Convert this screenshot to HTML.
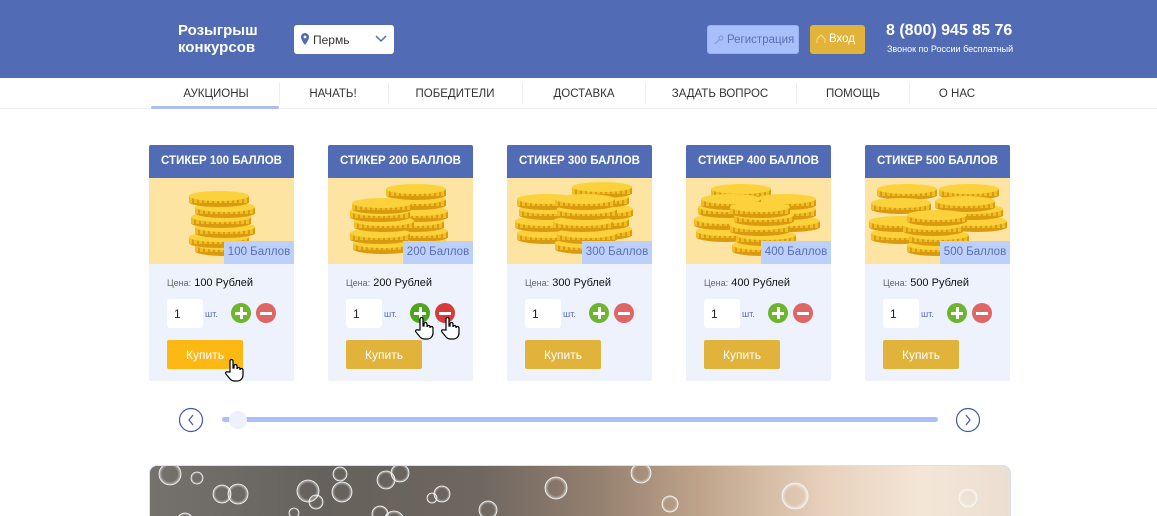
<!DOCTYPE html>
<html style="width:1157px;height:516px;overflow:hidden"><head><meta charset="utf-8"><style>
*{box-sizing:border-box;margin:0;padding:0}
body{width:1157px;height:516px;overflow:hidden;background:#fff;font-family:"Liberation Sans",Arial,sans-serif;position:relative}
.abs{position:absolute}
.hdr{left:0;top:0;width:1157px;height:78px;background:#516bb4}
.logo{left:178px;top:22px;color:#fff;font-weight:bold;font-size:15px;line-height:17px}
.sel{left:294px;top:25px;width:100px;height:29px;background:#fff;border-radius:3px;font-size:12px;color:#333;padding:8px 0 0 19px}
.btn{border-radius:3px;font-size:11.5px;height:29px;top:25px;padding-top:8px}
.nav{left:0;top:78px;width:1157px;height:31px;border-bottom:1px solid #eef0f4;background:#fff}
.ni{top:88px;font-size:11.5px;color:#333;transform:translateX(-50%);white-space:nowrap}
.dv{top:83px;width:1px;height:21px;background:#eceef2}
.card{top:145px;width:145px;height:236px;background:#edf2fd;border-radius:2px;overflow:hidden}
.ch{height:33px;background:#516bb4;color:#fff;font-weight:bold;font-size:11.5px;text-align:center;padding-top:10px}
.img{position:relative;height:86px;background:#fde4a2}
.badge{position:absolute;right:0;bottom:0;width:70px;height:23px;background:#bdd0fa;color:#5b6fb2;font-size:11.5px;text-align:center;padding-top:5px}
.price{position:absolute;left:18px;top:132px;font-size:11px;color:#111}
.price span{font-size:9px;color:#666}
.inp{position:absolute;left:18px;top:154px;width:36px;height:29px;background:#fff;border-radius:3px;font-size:12px;padding:8px 0 0 7px;color:#222}
.sht{position:absolute;left:56px;top:164px;font-size:9px;color:#5b6fb2}
.pl,.mi{position:absolute;top:158px;width:20px;height:20px;border-radius:50%}
.pl{left:82px;background:#6db52d}.mi{left:107px;background:#e06565}
.pl:before,.mi:before{content:"";position:absolute;left:4px;top:8.5px;width:12px;height:3px;background:#fff}
.pl:after{content:"";position:absolute;left:8.5px;top:4px;width:3px;height:12px;background:#fff}
.buy{position:absolute;left:18px;top:195px;width:76px;height:29px;background:#e2b33b;border-radius:2px;color:#fff;font-size:12px;text-align:center;padding-top:8px}
</style></head><body>
<svg width="0" height="0" style="position:absolute"><defs>
<pattern id="st" width="5" height="10" patternUnits="userSpaceOnUse"><rect width="5" height="10" fill="#f2bd22"/><rect x="3" width="2" height="10" fill="#d79d12"/></pattern>
<g id="c"><ellipse cx="0" cy="9" rx="30" ry="5" fill="#d99a10"/><rect x="-30" y="3" width="60" height="7" fill="url(#st)"/><ellipse cx="0" cy="3" rx="30" ry="5" fill="#fbd23c"/></g>
<radialGradient id="bb"><stop offset="0.7" stop-color="#fff" stop-opacity="0"/><stop offset="1" stop-color="#fff" stop-opacity=".6"/></radialGradient>
</defs></svg>

<div class="abs hdr"></div>
<div class="abs logo">Розыгрыш<br>конкурсов</div>
<div class="abs sel">Пермь
<svg class="abs" style="left:7px;top:8px" width="8" height="12" viewBox="0 0 8 12"><path d="M4 0C1.8 0 0 1.8 0 4c0 3 4 8 4 8s4-5 4-8c0-2.2-1.8-4-4-4z" fill="#516bb4"/><circle cx="4" cy="4" r="1.4" fill="#fff"/></svg>
<svg class="abs" style="left:81px;top:10px" width="12" height="8" viewBox="0 0 12 8"><path d="M1 1l5 5 5-5" stroke="#516bb4" stroke-width="1.5" fill="none"/></svg></div>
<div class="abs btn" style="left:707px;width:92px;background:#a9bff9;border:1px solid #98b0f0;color:#5b6fb2;padding-left:19px">Регистрация
<svg class="abs" style="left:6px;top:9px" width="10" height="10" viewBox="0 0 10 10"><circle cx="7" cy="3" r="2" stroke="#7f95d4" fill="none"/><path d="M5.5 4.5L1 9" stroke="#7f95d4"/></svg></div>
<div class="abs btn" style="left:810px;width:55px;background:#e2b33b;color:#fff;padding-left:19px">Вход
<svg class="abs" style="left:6px;top:9px" width="10" height="10" viewBox="0 0 10 10"><path d="M1 9V5l4-4 4 4v4" stroke="#f8dc90" fill="none"/></svg></div>
<div class="abs" style="left:886px;top:22px;color:#fff;font-weight:bold;font-size:16px">8 (800) 945 85 76</div>
<div class="abs" style="left:887px;top:44px;color:#fff;font-size:9px">Звонок по России бесплатный</div>

<div class="abs nav"></div>
<div class="abs" style="left:151px;top:106px;width:128px;height:3px;background:#a9bff9;border-radius:2px"></div>
<div class="abs ni" style="left:216px">АУКЦИОНЫ</div>
<div class="abs ni" style="left:333px">НАЧАТЬ!</div>
<div class="abs ni" style="left:455px">ПОБЕДИТЕЛИ</div>
<div class="abs ni" style="left:584px">ДОСТАВКА</div>
<div class="abs ni" style="left:720px">ЗАДАТЬ ВОПРОС</div>
<div class="abs ni" style="left:853px">ПОМОЩЬ</div>
<div class="abs ni" style="left:957px">О НАС</div>
<div class="abs dv" style="left:279px"></div><div class="abs dv" style="left:388px"></div><div class="abs dv" style="left:522px"></div><div class="abs dv" style="left:645px"></div><div class="abs dv" style="left:796px"></div><div class="abs dv" style="left:909px"></div>

<div class="abs card" style="left:149px"><div class="ch">СТИКЕР 100 БАЛЛОВ</div><div class="img">
<svg width="145" height="86"><use href="#c" x="76" y="64"/><use href="#c" x="70" y="56"/><use href="#c" x="76" y="46"/><use href="#c" x="72" y="36"/><use href="#c" x="76" y="26"/><use href="#c" x="70" y="15"/></svg>
<div class="badge">100 Баллов</div></div>
<div class="price"><span>Цена:</span> 100 Рублей</div><div class="inp">1</div><div class="sht">шт.</div><div class="pl"></div><div class="mi"></div><div class="buy" style="background:#fdb813">Купить</div></div>

<div class="abs card" style="left:328px"><div class="ch">СТИКЕР 200 БАЛЛОВ</div><div class="img">
<svg width="145" height="86"><use href="#c" x="88" y="60"/><use href="#c" x="90" y="50"/><use href="#c" x="86" y="40"/><use href="#c" x="90" y="30"/><use href="#c" x="88" y="18"/><use href="#c" x="88" y="8"/><use href="#c" x="55" y="62"/><use href="#c" x="52" y="52"/><use href="#c" x="56" y="40"/><use href="#c" x="52" y="30"/><use href="#c" x="54" y="22"/></svg>
<div class="badge">200 Баллов</div></div>
<div class="price"><span>Цена:</span> 200 Рублей</div><div class="inp">1</div><div class="sht">шт.</div><div class="pl" style="background:#4ea51c"></div><div class="mi" style="background:#d63b3b"></div><div class="buy">Купить</div></div>

<div class="abs card" style="left:507px"><div class="ch">СТИКЕР 300 БАЛЛОВ</div><div class="img">
<svg width="145" height="86"><use href="#c" x="95" y="48"/><use href="#c" x="92" y="38"/><use href="#c" x="96" y="28"/><use href="#c" x="92" y="16"/><use href="#c" x="95" y="6"/><use href="#c" x="40" y="52"/><use href="#c" x="38" y="40"/><use href="#c" x="42" y="28"/><use href="#c" x="40" y="18"/><use href="#c" x="78" y="62"/><use href="#c" x="80" y="52"/><use href="#c" x="76" y="40"/><use href="#c" x="80" y="28"/><use href="#c" x="78" y="18"/></svg>
<div class="badge">300 Баллов</div></div>
<div class="price"><span>Цена:</span> 300 Рублей</div><div class="inp">1</div><div class="sht">шт.</div><div class="pl"></div><div class="mi"></div><div class="buy">Купить</div></div>

<div class="abs card" style="left:686px"><div class="ch">СТИКЕР 400 БАЛЛОВ</div><div class="img">
<svg width="145" height="86"><use href="#c" x="55" y="8"/><use href="#c" x="104" y="40"/><use href="#c" x="100" y="28"/><use href="#c" x="100" y="18"/><use href="#c" x="40" y="50"/><use href="#c" x="38" y="38"/><use href="#c" x="42" y="26"/><use href="#c" x="45" y="18"/><use href="#c" x="76" y="64"/><use href="#c" x="80" y="54"/><use href="#c" x="74" y="44"/><use href="#c" x="78" y="34"/><use href="#c" x="74" y="26"/></svg>
<div class="badge">400 Баллов</div></div>
<div class="price"><span>Цена:</span> 400 Рублей</div><div class="inp">1</div><div class="sht">шт.</div><div class="pl"></div><div class="mi"></div><div class="buy">Купить</div></div>

<div class="abs card" style="left:865px"><div class="ch">СТИКЕР 500 БАЛЛОВ</div><div class="img">
<svg width="145" height="86"><use href="#c" x="42" y="8"/><use href="#c" x="104" y="8"/><use href="#c" x="112" y="40"/><use href="#c" x="108" y="28"/><use href="#c" x="100" y="20"/><use href="#c" x="36" y="52"/><use href="#c" x="34" y="40"/><use href="#c" x="36" y="22"/><use href="#c" x="72" y="64"/><use href="#c" x="74" y="54"/><use href="#c" x="68" y="44"/><use href="#c" x="72" y="34"/></svg>
<div class="badge">500 Баллов</div></div>
<div class="price"><span>Цена:</span> 500 Рублей</div><div class="inp">1</div><div class="sht">шт.</div><div class="pl"></div><div class="mi"></div><div class="buy">Купить</div></div>

<svg class="abs" style="left:224px;top:358px" width="20" height="24" viewBox="0 0 20 24"><path d="M6 14V3a1.5 1.5 0 013 0v7h1V8a1.5 1.5 0 013 0v3a1.5 1.5 0 013 0v1a1.5 1.5 0 013 0v5c0 3-2 6-6 6H10c-2 0-3-1-4-2l-4-5c-1-1 0-3 2-2z" fill="#fff" stroke="#000" stroke-width="1.2"/></svg>
<svg class="abs" style="left:414px;top:316px" width="20" height="24" viewBox="0 0 20 24"><path d="M6 14V3a1.5 1.5 0 013 0v7h1V8a1.5 1.5 0 013 0v3a1.5 1.5 0 013 0v1a1.5 1.5 0 013 0v5c0 3-2 6-6 6H10c-2 0-3-1-4-2l-4-5c-1-1 0-3 2-2z" fill="#fff" stroke="#000" stroke-width="1.2"/></svg>
<svg class="abs" style="left:440px;top:316px" width="20" height="24" viewBox="0 0 20 24"><path d="M6 14V3a1.5 1.5 0 013 0v7h1V8a1.5 1.5 0 013 0v3a1.5 1.5 0 013 0v1a1.5 1.5 0 013 0v5c0 3-2 6-6 6H10c-2 0-3-1-4-2l-4-5c-1-1 0-3 2-2z" fill="#fff" stroke="#000" stroke-width="1.2"/></svg>

<svg class="abs" style="left:178px;top:407px" width="26" height="26"><ellipse cx="13" cy="13" rx="11.5" ry="11.5" fill="#fff" stroke="#3f57a8" stroke-width="1.2"/><path d="M15 8l-4 5 4 5" stroke="#3f57a8" stroke-width="1.2" fill="none"/></svg>
<svg class="abs" style="left:955px;top:407px" width="26" height="26"><ellipse cx="13" cy="13" rx="11.5" ry="11.5" fill="#fff" stroke="#3f57a8" stroke-width="1.2"/><path d="M11 8l4 5-4 5" stroke="#3f57a8" stroke-width="1.2" fill="none"/></svg>
<div class="abs" style="left:222px;top:417px;width:716px;height:5px;background:#a9bff9;border-radius:3px"></div>
<div class="abs" style="left:229px;top:411px;width:18px;height:18px;background:#edf1fb;border-radius:50%"></div>

<div class="abs" style="left:149px;top:465px;width:862px;height:51px;border-radius:8px 8px 0 0;border:1px solid #d6e0f8;border-bottom:0;overflow:hidden;background:linear-gradient(90deg,#75726d 0%,#66615c 20%,#6e6660 38%,#94806f 52%,#bfa48b 64%,#e6d0bb 78%,#f4e6d7 90%,#ebdfd2 100%)">
<svg width="862" height="60" style="position:absolute;left:0;top:0" stroke="#f4f6f6" stroke-width=".8">
<g fill="url(#bb)"><circle cx="20" cy="8" r="11"/><circle cx="47" cy="12" r="6"/><circle cx="72" cy="28" r="9"/><circle cx="88" cy="28" r="10"/><circle cx="35" cy="55" r="8"/>
<circle cx="158" cy="25" r="11"/><circle cx="166" cy="36" r="7"/><circle cx="144" cy="47" r="5"/><circle cx="192" cy="26" r="10"/><circle cx="190" cy="8" r="7"/>
<circle cx="236" cy="14" r="9"/><circle cx="250" cy="7" r="9"/><circle cx="230" cy="48" r="8"/><circle cx="282" cy="32" r="5"/><circle cx="292" cy="28" r="8"/><circle cx="244" cy="55" r="10"/>
<circle cx="406" cy="22" r="11"/><circle cx="338" cy="44" r="9"/><circle cx="491" cy="7" r="10"/><circle cx="520" cy="38" r="8"/><circle cx="645" cy="30" r="13"/><circle cx="818" cy="32" r="9"/></g>
</svg></div>
</body></html>
